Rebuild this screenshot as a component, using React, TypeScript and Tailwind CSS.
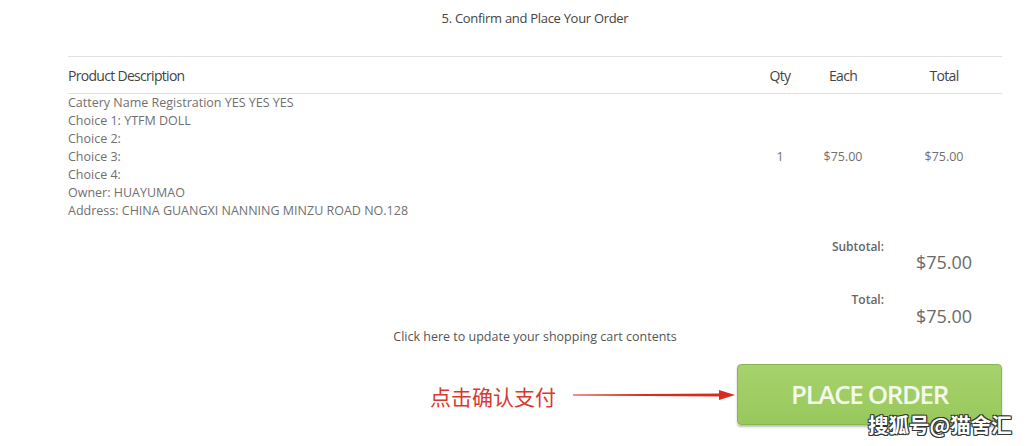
export default function App() {
  const lines = [
    "Cattery Name Registration YES YES YES",
    "Choice 1: YTFM DOLL",
    "Choice 2:",
    "Choice 3:",
    "Choice 4:",
    "Owner: HUAYUMAO",
    "Address: CHINA GUANGXI NANNING MINZU ROAD NO.128",
  ];

  return (
    <div className="relative min-h-[446px] w-[1035px] bg-white font-['Open_Sans',sans-serif] text-[#555]">
      <div className="ml-[68px] w-[934px]">
        {/* title */}
        <div className="h-[36px] text-center text-[13px] leading-[36px] text-[#444] tracking-[-0.3px]">
          5. Confirm and Place Your Order
        </div>

        {/* order table */}
        <div className="mt-[20px] border-t border-[#e2e2e2]">
          <div className="grid h-[37px] grid-cols-[1fr_40px_86px_116px] items-center border-b border-[#e2e2e2] text-[14px] tracking-[-0.7px] text-[#444]">
            <div>Product Description</div>
            <div className="text-center">Qty</div>
            <div className="text-center">Each</div>
            <div className="text-center">Total</div>
          </div>

          <div className="grid grid-cols-[1fr_40px_86px_116px] items-center text-[12.5px] text-[#707070]">
            <div className="leading-[18px]">
              {lines.map((l) => (
                <div key={l}>{l}</div>
              ))}
            </div>
            <div className="text-center">1</div>
            <div className="text-center">$75.00</div>
            <div className="text-center">$75.00</div>
          </div>

          {/* totals */}
          <div className="mt-[18px] grid grid-cols-[1fr_40px_86px_116px]">
            <div className="col-start-3 pr-[2px] text-right text-[12px] font-semibold leading-[18px] text-[#666]">
              Subtotal:
            </div>
            <div className="pt-[12px] text-center text-[18px] leading-[24px] text-[#6a6a6a]">$75.00</div>
          </div>
          <div className="mt-[17px] grid grid-cols-[1fr_40px_86px_116px]">
            <div className="col-start-3 pr-[2px] text-right text-[12px] font-semibold leading-[18px] text-[#666]">
              Total:
            </div>
            <div className="pt-[13px] text-center text-[18px] leading-[24px] text-[#6a6a6a]">$75.00</div>
          </div>

          <div className="text-center text-[12.5px] leading-[18px] text-[#555]">
            Click here to update your shopping cart contents
          </div>
        </div>

        {/* place order */}
        <div className="mt-[18px] flex items-center justify-end">
          <div className="mr-[2px] mt-[4px] flex items-center">
            <span className="font-['Noto_Sans_CJK_SC',sans-serif] text-[21px] leading-none text-[#d8392e]">
              点击确认支付
            </span>
            <svg width="162" height="12" viewBox="0 0 162 12" className="ml-[17px] -mt-[4px]">
              <path d="M0 5.6 L148 4.6 L148 7.4 L0 6.4 Z" fill="#d92b20" />
              <path d="M146 1 L162 6 L146 11 Z" fill="#d92b20" />
            </svg>
          </div>
          <button className="h-[61px] w-[265px] rounded-[4px] border border-[#86b552] bg-gradient-to-b from-[#a6d36c] to-[#98c85c] text-[26px] font-semibold tracking-[-1.4px] text-[#f4f9ec] shadow-[0_2px_2px_rgba(0,0,0,0.25)]">
            PLACE ORDER
          </button>
        </div>
      </div>

      {/* watermark */}
      <div className="absolute left-[868px] top-[411px] font-['Noto_Sans_CJK_SC',sans-serif] text-[20.5px] font-bold leading-[26px] text-white [text-shadow:1px_1px_0_#333,-1px_-1px_0_#333,1px_-1px_0_#333,-1px_1px_0_#333,0_1px_0_#333,1px_0_0_#333]">
        搜狐号@猫舍汇
      </div>
    </div>
  );
}
